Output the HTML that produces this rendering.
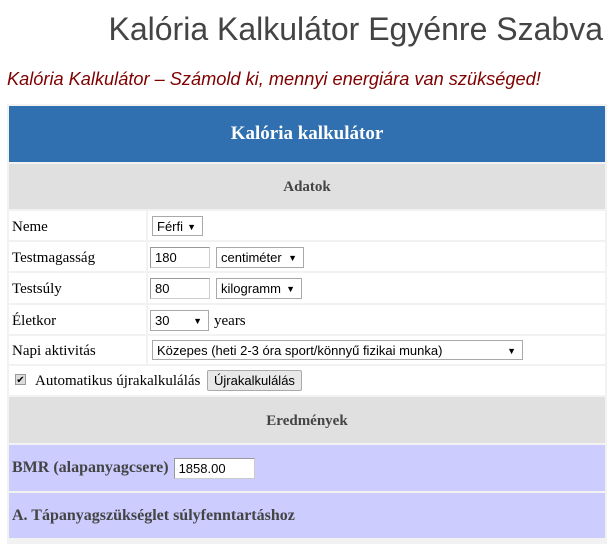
<!DOCTYPE html>
<html><head><meta charset="utf-8"><style>
body{margin:0;width:609px;height:532px;overflow:hidden;background:#fff;position:relative;font-family:"Liberation Serif",serif;}
.a{position:absolute;}
h1{position:absolute;right:6px;top:11px;margin:0;font:32px "Liberation Sans",sans-serif;color:#444;white-space:nowrap;}
.sub{left:7px;top:69px;font:italic 18.2px "Liberation Sans",sans-serif;color:#800000;white-space:nowrap;}
.tbl{left:7px;top:104px;width:600px;height:440px;background:#f2f2f2;}
.c{position:absolute;background:#fff;font-size:15px;color:#000;display:flex;align-items:center;}
.lab{left:9px;width:137px;padding-left:3px;padding-top:3px;box-sizing:border-box;}
.val{left:148px;width:457px;}
.sel,.inp,.btn{position:absolute;font:13px "Liberation Sans",sans-serif;box-sizing:border-box;height:21px;border:1px solid #a9a9a9;background:#fff;display:flex;align-items:center;padding-left:4px;}
.sel::after{content:"▼";position:absolute;right:6px;font-size:9px;top:5px;}
.inp{border-color:#999 #ccc #ccc #999;}
.btn{background:#e8e8e8;border-color:#aaa;border-radius:2px;padding:0 6px;}
</style></head><body>
<h1>Kalória Kalkulátor Egyénre Szabva</h1>
<div class="a sub">Kalória Kalkulátor – Számold ki, mennyi energiára van szükséged!</div>
<div class="a tbl"></div>
<div class="c" style="left:9px;top:106px;width:596px;height:56px;background:#3070b0;color:#fff;font-weight:bold;font-size:19px;justify-content:center;">Kalória kalkulátor</div>
<div class="c" style="left:9px;top:164px;width:596px;height:45px;background:#e0e0e0;color:#444;font-weight:bold;justify-content:center;padding-top:2px;box-sizing:border-box;">Adatok</div>

<div class="c lab" style="top:211px;height:29px;">Neme</div>
<div class="c val" style="top:211px;height:29px;"><div class="sel" style="left:4px;top:5px;width:51px;height:20px;">Férfi</div></div>
<div class="c lab" style="top:242px;height:29px;">Testmagasság</div>
<div class="c val" style="top:242px;height:29px;"><div class="inp" style="left:2px;top:5px;width:60px;">180</div><div class="sel" style="left:68px;top:5px;width:88px;">centiméter</div></div>
<div class="c lab" style="top:273px;height:30px;">Testsúly</div>
<div class="c val" style="top:273px;height:30px;"><div class="inp" style="left:2px;top:5px;width:60px;">80</div><div class="sel" style="left:68px;top:5px;width:86px;">kilogramm</div></div>
<div class="c lab" style="top:305px;height:29px;">Életkor</div>
<div class="c val" style="top:305px;height:29px;"><div class="sel" style="left:2px;top:5px;width:59px;">30</div><span style="position:absolute;left:66px;top:8px;">years</span></div>
<div class="c lab" style="top:336px;height:28px;">Napi aktivitás</div>
<div class="c val" style="top:336px;height:28px;"><div class="sel" style="left:4px;top:4px;width:371px;height:20px;">Közepes (heti 2-3 óra sport/könnyű fizikai munka)</div></div>
<div class="c" style="left:9px;top:366px;width:596px;height:29px;">
<span style="position:absolute;left:6px;top:8px;width:11px;height:11px;border:1px solid #999;background:#ddd;font:10px sans-serif;line-height:11px;text-align:center;box-sizing:border-box;">✔</span>
<span style="position:absolute;left:26px;top:7px;">Automatikus újrakalkulálás</span>
<div class="btn" style="left:198px;top:4px;height:21px;">Újrakalkulálás</div></div>

<div class="c" style="left:9px;top:397px;width:596px;height:46px;background:#e0e0e0;color:#444;font-weight:bold;justify-content:center;padding-top:2px;box-sizing:border-box;">Eredmények</div>
<div class="c" style="left:9px;top:445px;width:596px;height:46px;background:#ccccff;color:#444;font-weight:bold;font-size:16px;padding-left:3px;box-sizing:border-box;">BMR (alapanyagcsere)<div class="inp" style="position:relative;margin-left:5px;width:81px;font-weight:normal;color:#000;">1858.00</div></div>
<div class="c" style="left:9px;top:493px;width:596px;height:45px;background:#ccccff;color:#444;font-weight:bold;font-size:16px;padding-left:3px;box-sizing:border-box;">A. Tápanyagszükséglet súlyfenntartáshoz</div>
</body></html>
